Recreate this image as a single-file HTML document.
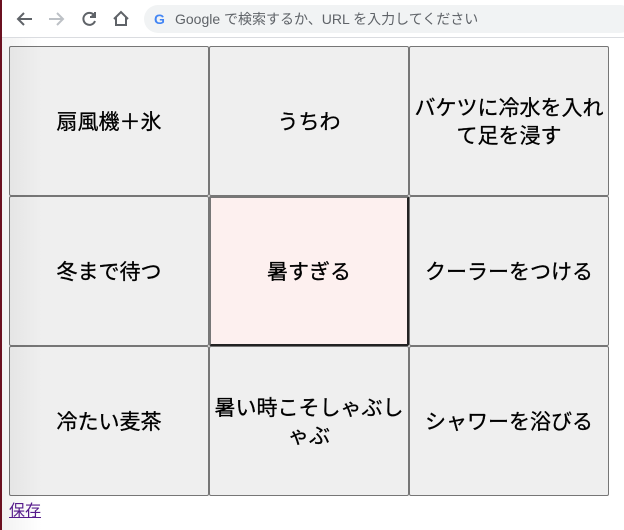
<!DOCTYPE html>
<html><head><meta charset="utf-8"><style>
body{margin:0;width:624px;height:530px;overflow:hidden;background:#fff;font-family:"Liberation Sans","Noto Sans CJK JP",sans-serif;position:relative}
.edge{position:absolute;left:0;top:0;width:2px;height:530px;background:#6b1020}
.shade{position:absolute;left:2px;top:38px;width:40px;height:492px;background:linear-gradient(90deg,rgba(0,0,0,.05),rgba(0,0,0,0))}
.bar{position:absolute;left:2px;top:0;width:622px;height:37px;background:#fff;border-bottom:1px solid #dadce0}
.omni{position:absolute;left:142px;top:5px;width:490px;height:28px;border-radius:14px;background:#f1f3f4;font-size:14px;color:#5f6368;line-height:28px}
.btn{position:absolute;width:198px;height:148px;background:#efefef;border:1px solid #767676;border-radius:2px;display:flex;align-items:center;justify-content:center;text-align:center;font-size:21px;line-height:28px;color:#000;box-sizing:content-box;padding-top:3px;height:145px;-webkit-text-stroke:0.3px #000}
.c{background:#fdf0ef;border-color:#777 #222 #222 #777;border-width:2px;width:196px;height:143px}
a{position:absolute;left:9px;top:497px;color:#551a8b;font-size:16px}
</style></head><body>
<div class="bar">
<svg width="140" height="37" style="position:absolute;left:0;top:0" fill="none" stroke-width="2">
<path d="M30 19H16M22 13l-6 6 6 6" stroke="#5f6368"/>
<path d="M47 19h14M55 13l6 6-6 6" stroke="#bdc1c6"/>
<path d="M92 15a6 6 0 1 0 1 6" stroke="#5f6368"/><path d="M93 12v5h-5" stroke="#5f6368" fill="#5f6368"/>
<path d="M112 19l7-7 7 7M114 17v8h10v-8" stroke="#5f6368"/>
</svg>
<div class="omni"><span style="position:absolute;left:10px;font-weight:bold;font-size:14px;color:#4285f4">G</span><span style="position:absolute;left:31px">Google で検索するか、URL を入力してください</span></div>
</div>
<div class="edge"></div>
<div class="btn" style="left:9px;top:46px">扇風機＋氷</div>
<div class="btn" style="left:209px;top:46px">うちわ</div>
<div class="btn" style="left:409px;top:46px">バケツに冷水を入れて足を浸す</div>
<div class="btn" style="left:9px;top:196px">冬まで待つ</div>
<div class="btn c" style="left:209px;top:196px">暑すぎる</div>
<div class="btn" style="left:409px;top:196px">クーラーをつける</div>
<div class="btn" style="left:9px;top:346px">冷たい麦茶</div>
<div class="btn" style="left:209px;top:346px">暑い時こそしゃぶしゃぶ</div>
<div class="btn" style="left:409px;top:346px">シャワーを浴びる</div>
<div class="shade"></div>
<a href="#">保存</a>
</body></html>
